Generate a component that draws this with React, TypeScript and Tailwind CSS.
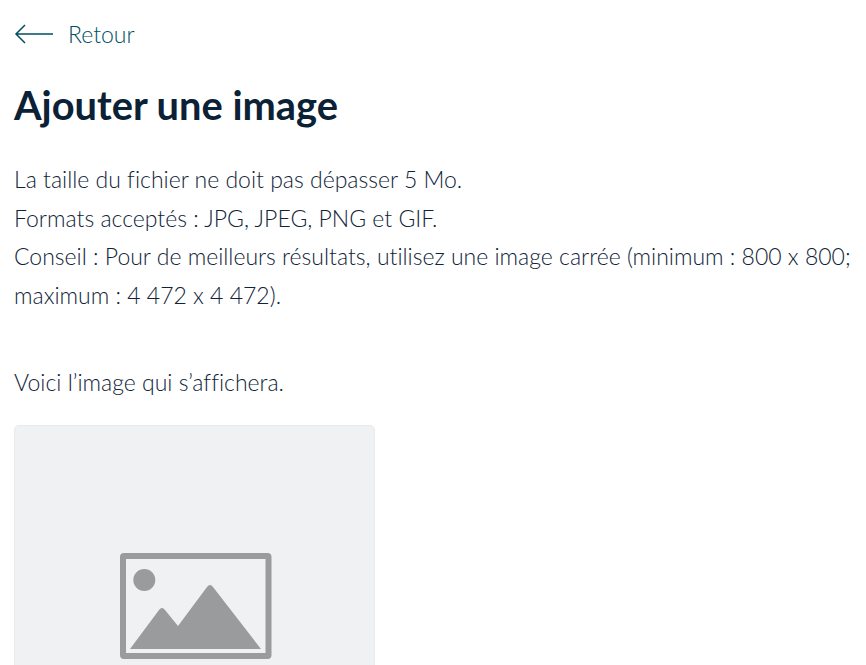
export default function App() {
  return (
    <main className="h-[665px] overflow-hidden bg-white pl-[14px] font-['Lato',sans-serif] text-[#0f2438] [font-variant-ligatures:none]">
      <a className="flex items-center gap-[14px] pt-[22px] text-[#004f63]">
        <svg width="40" height="24" viewBox="0 0 40 24" fill="none" stroke="currentColor" strokeWidth="1.5">
          <path d="M39 12H2M11 3l-9 9 9 9" />
        </svg>
        <span className="text-[23px] leading-[24px] font-light">Retour</span>
      </a>

      <h1 className="mt-[35px] text-[39.8px] leading-[48px] font-bold text-[#0a2136]">Ajouter une image</h1>

      <div className="mt-[31px] text-[23px] leading-[38.7px] font-light">
        <p>La taille du fichier ne doit pas dépasser 5 Mo.</p>
        <p>Formats acceptés : JPG, JPEG, PNG et GIF.</p>
        <p className="whitespace-nowrap">Conseil : Pour de meilleurs résultats, utilisez une image carrée (minimum : 800 x 800;</p>
        <p>maximum : 4 472 x 4 472).</p>
        <p className="mt-[48px]">Voici l’image qui s’affichera.</p>
      </div>

      <div className="mt-[23px] flex h-[361px] w-[361px] items-center justify-center rounded-[5px] border border-[#e9eaec] bg-[#f0f1f3]">
        <svg width="155" height="107" viewBox="0 0 155 107" fill="#9a9b9d">
          <rect x="6" y="4" width="145.5" height="100" rx="1" fill="none" stroke="#9a9b9d" strokeWidth="6" />
          <circle cx="27.3" cy="28" r="11" />
          <path d="M13 97L42 58Q45 54 48 58L61 74L90 35Q93 31 96 35L144 97Z" />
        </svg>
      </div>
    </main>
  );
}
